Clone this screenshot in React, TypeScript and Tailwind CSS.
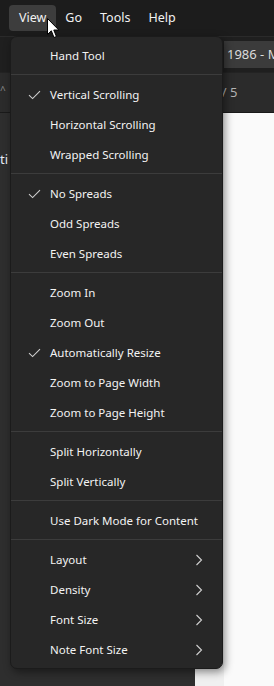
import React from 'react';

type Item =
  | { kind: 'item'; label: string; checked?: boolean; submenu?: boolean }
  | { kind: 'sep' };

const items: Item[] = [
  { kind: 'item', label: 'Hand Tool' },
  { kind: 'sep' },
  { kind: 'item', label: 'Vertical Scrolling', checked: true },
  { kind: 'item', label: 'Horizontal Scrolling' },
  { kind: 'item', label: 'Wrapped Scrolling' },
  { kind: 'sep' },
  { kind: 'item', label: 'No Spreads', checked: true },
  { kind: 'item', label: 'Odd Spreads' },
  { kind: 'item', label: 'Even Spreads' },
  { kind: 'sep' },
  { kind: 'item', label: 'Zoom In' },
  { kind: 'item', label: 'Zoom Out' },
  { kind: 'item', label: 'Automatically Resize', checked: true },
  { kind: 'item', label: 'Zoom to Page Width' },
  { kind: 'item', label: 'Zoom to Page Height' },
  { kind: 'sep' },
  { kind: 'item', label: 'Split Horizontally' },
  { kind: 'item', label: 'Split Vertically' },
  { kind: 'sep' },
  { kind: 'item', label: 'Use Dark Mode for Content' },
  { kind: 'sep' },
  { kind: 'item', label: 'Layout', submenu: true },
  { kind: 'item', label: 'Density', submenu: true },
  { kind: 'item', label: 'Font Size', submenu: true },
  { kind: 'item', label: 'Note Font Size', submenu: true },
];

function Check() {
  return (
    <svg width="13" height="10" viewBox="0 0 13 10" fill="none">
      <path d="M1 5.2 L4.6 8.6 L12 1.2" stroke="#cfcfcf" strokeWidth="1.1" />
    </svg>
  );
}

function Chevron() {
  return (
    <svg width="8" height="12" viewBox="0 0 8 12" fill="none">
      <path d="M1.5 1 L6.5 6 L1.5 11" stroke="#d0d0d0" strokeWidth="1.1" />
    </svg>
  );
}

function Cursor() {
  return (
    <svg width="13" height="21" viewBox="0 0 13 21">
      <path d="M0.5 0.5 L0.5 16.5 L4.3 12.8 L7 19.5 L9.4 18.5 L6.8 12 L11.8 12 Z" fill="#fff" stroke="#000" strokeWidth="1" />
    </svg>
  );
}

export default function App() {
  return (
    <div className="relative w-[274px] h-[686px] overflow-hidden bg-[#f0f0f0] text-[11.5px]" style={{ fontFamily: "'Noto Sans', 'Liberation Sans', sans-serif" }}>
      {/* menu bar */}
      <div className="h-[36px] bg-[#1c1c1c] flex items-center pl-[9px] text-[#f2f2f2] text-[12.5px]">
        <div className="h-[26px] px-[10px] flex items-center rounded-[4px] bg-[#3d3d3d]">View</div>
        <div className="h-[26px] px-[9px] flex items-center">Go</div>
        <div className="h-[26px] px-[9px] flex items-center">Tools</div>
        <div className="h-[26px] px-[9px] flex items-center">Help</div>
      </div>

      {/* tab strip */}
      <div className="h-[36px] bg-[#1f1f1f] border-t border-[#2a2a2a] flex items-center">
        <div className="ml-[224px] h-[27px] flex-1 bg-[#3b3b3b] flex items-center pl-[3px] text-[#dcdcdc] text-[13px] whitespace-nowrap overflow-hidden">1986 - Manual</div>
      </div>

      {/* toolbar */}
      <div className="h-[41px] bg-[#2b2b2b] border-t border-[#232323] border-b border-b-[#1a1a1a] flex items-center">
        <span className="text-[#8a8a8a] text-[10px] -mt-[4px]">^</span>
        <span className="ml-[216px] text-[#b4b4b4] text-[13px]">/ 5</span>
      </div>

      {/* main */}
      <div className="flex h-[573px]">
        <div className="w-[195px] bg-[#2e2e2e] pt-[37px] overflow-hidden">
          <div className="text-[#e6ecf5] text-[13px] whitespace-nowrap">ti</div>
        </div>
        <div className="flex-1 bg-[#f0f0f0] pl-[29px]">
          <div className="h-full bg-[#fafafa]" />
        </div>
      </div>

      {/* dropdown */}
      <div className="absolute left-[10px] top-[36px] w-[213px] bg-[#272727] border border-[#1b1b1b] rounded-[7px] shadow-[2px_3px_8px_rgba(0,0,0,0.45)] pt-[4px] pb-[3px] text-[#f3f3f3]">
        {items.map((it, i) =>
          it.kind === 'sep' ? (
            <div key={i} className="h-[9px] pt-[3px]">
              <div className="h-px bg-[#3c3c3c]" />
            </div>
          ) : (
            <div key={i} className="h-[30px] flex items-center">
              <div className="w-[39px] pl-[17px]">{it.checked && <Check />}</div>
              <div className="flex-1 whitespace-nowrap">{it.label}</div>
              {it.submenu && <div className="w-[28px] pl-[1px]"><Chevron /></div>}
            </div>
          )
        )}
      </div>

      <div className="absolute left-[47px] top-[18px]">
        <Cursor />
      </div>
    </div>
  );
}
